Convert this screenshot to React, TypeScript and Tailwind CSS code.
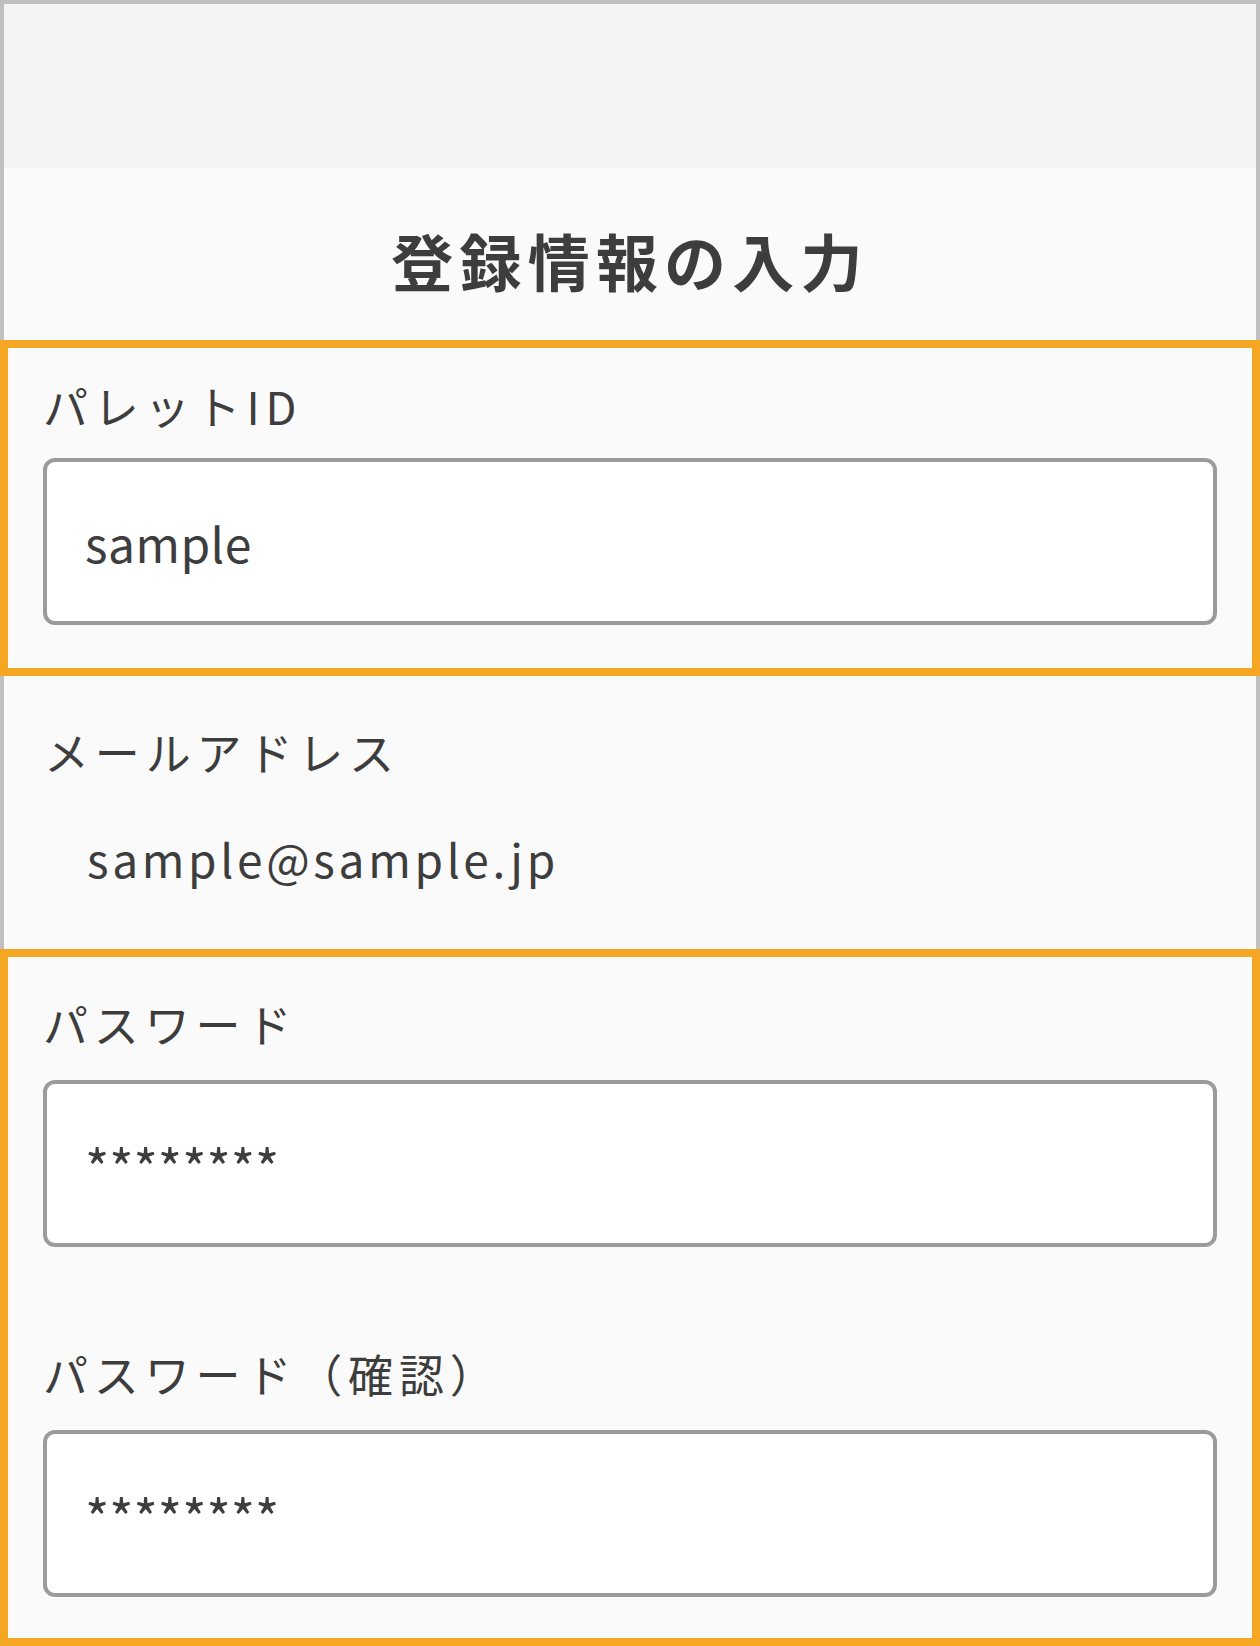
import { useState } from 'react';

const FONT = "font-['Noto_Sans_CJK_JP','Noto_Sans',sans-serif]";

function Field({
  label,
  value,
  masked,
  onChange,
}: {
  label: string;
  value: string;
  masked?: boolean;
  onChange: (v: string) => void;
}) {
  return (
    <div className="flex flex-col">
      <label className="h-12 text-[45px] leading-[48px] tracking-[0.13em] whitespace-nowrap">{label}</label>
      <input
        className={`h-[167px] w-full rounded-[12px] border-4 border-[#9b9b9b] bg-white pl-[38px] pr-[36px] text-[#3d3d3d] outline-none ${
          masked ? 'mt-[32px] pt-[4px] text-[52px]' : 'mt-[28px] text-[48px] tracking-[0.01em]'
        }`}
        value={value}
        onChange={(e) => onChange(e.target.value)}
      />
    </div>
  );
}

export default function App() {
  const [paletteId, setPaletteId] = useState('sample');
  const [password, setPassword] = useState('********');
  const [confirm, setConfirm] = useState('********');

  return (
    <div className={`${FONT} w-[1260px] border-x-4 border-t-4 border-[#c0c0c0] bg-[#fafafa] text-[#3d3d3d]`}>
      <div className="h-[164px] bg-[#f4f4f4]" />

      <div className="flex h-[172px] items-center justify-center pt-[12px]">
        <h1 className="text-[62px] font-bold leading-none tracking-[0.1em]">登録情報の入力</h1>
      </div>

      <div className="-mx-1 border-8 border-[#f5a623] px-[35px] pt-[34px] pb-[43px]">
        <Field label="パレットID" value={paletteId} onChange={setPaletteId} />
      </div>

      <div className="h-[273px] px-10 pt-[52px]">
        <div className="h-12 text-[45px] leading-[48px] tracking-[0.13em]">メールアドレス</div>
        <div className="mt-[58px] pl-[43px] text-[46px] leading-[48px] tracking-[0.08em]">sample@sample.jp</div>
      </div>

      <div className="-mx-1 border-8 border-[#f5a623] px-[35px] pt-[43px] pb-[41px]">
        <Field label="パスワード" value={password} masked onChange={setPassword} />
        <div className="mt-[103px]">
          <Field label="パスワード（確認）" value={confirm} masked onChange={setConfirm} />
        </div>
      </div>
    </div>
  );
}
